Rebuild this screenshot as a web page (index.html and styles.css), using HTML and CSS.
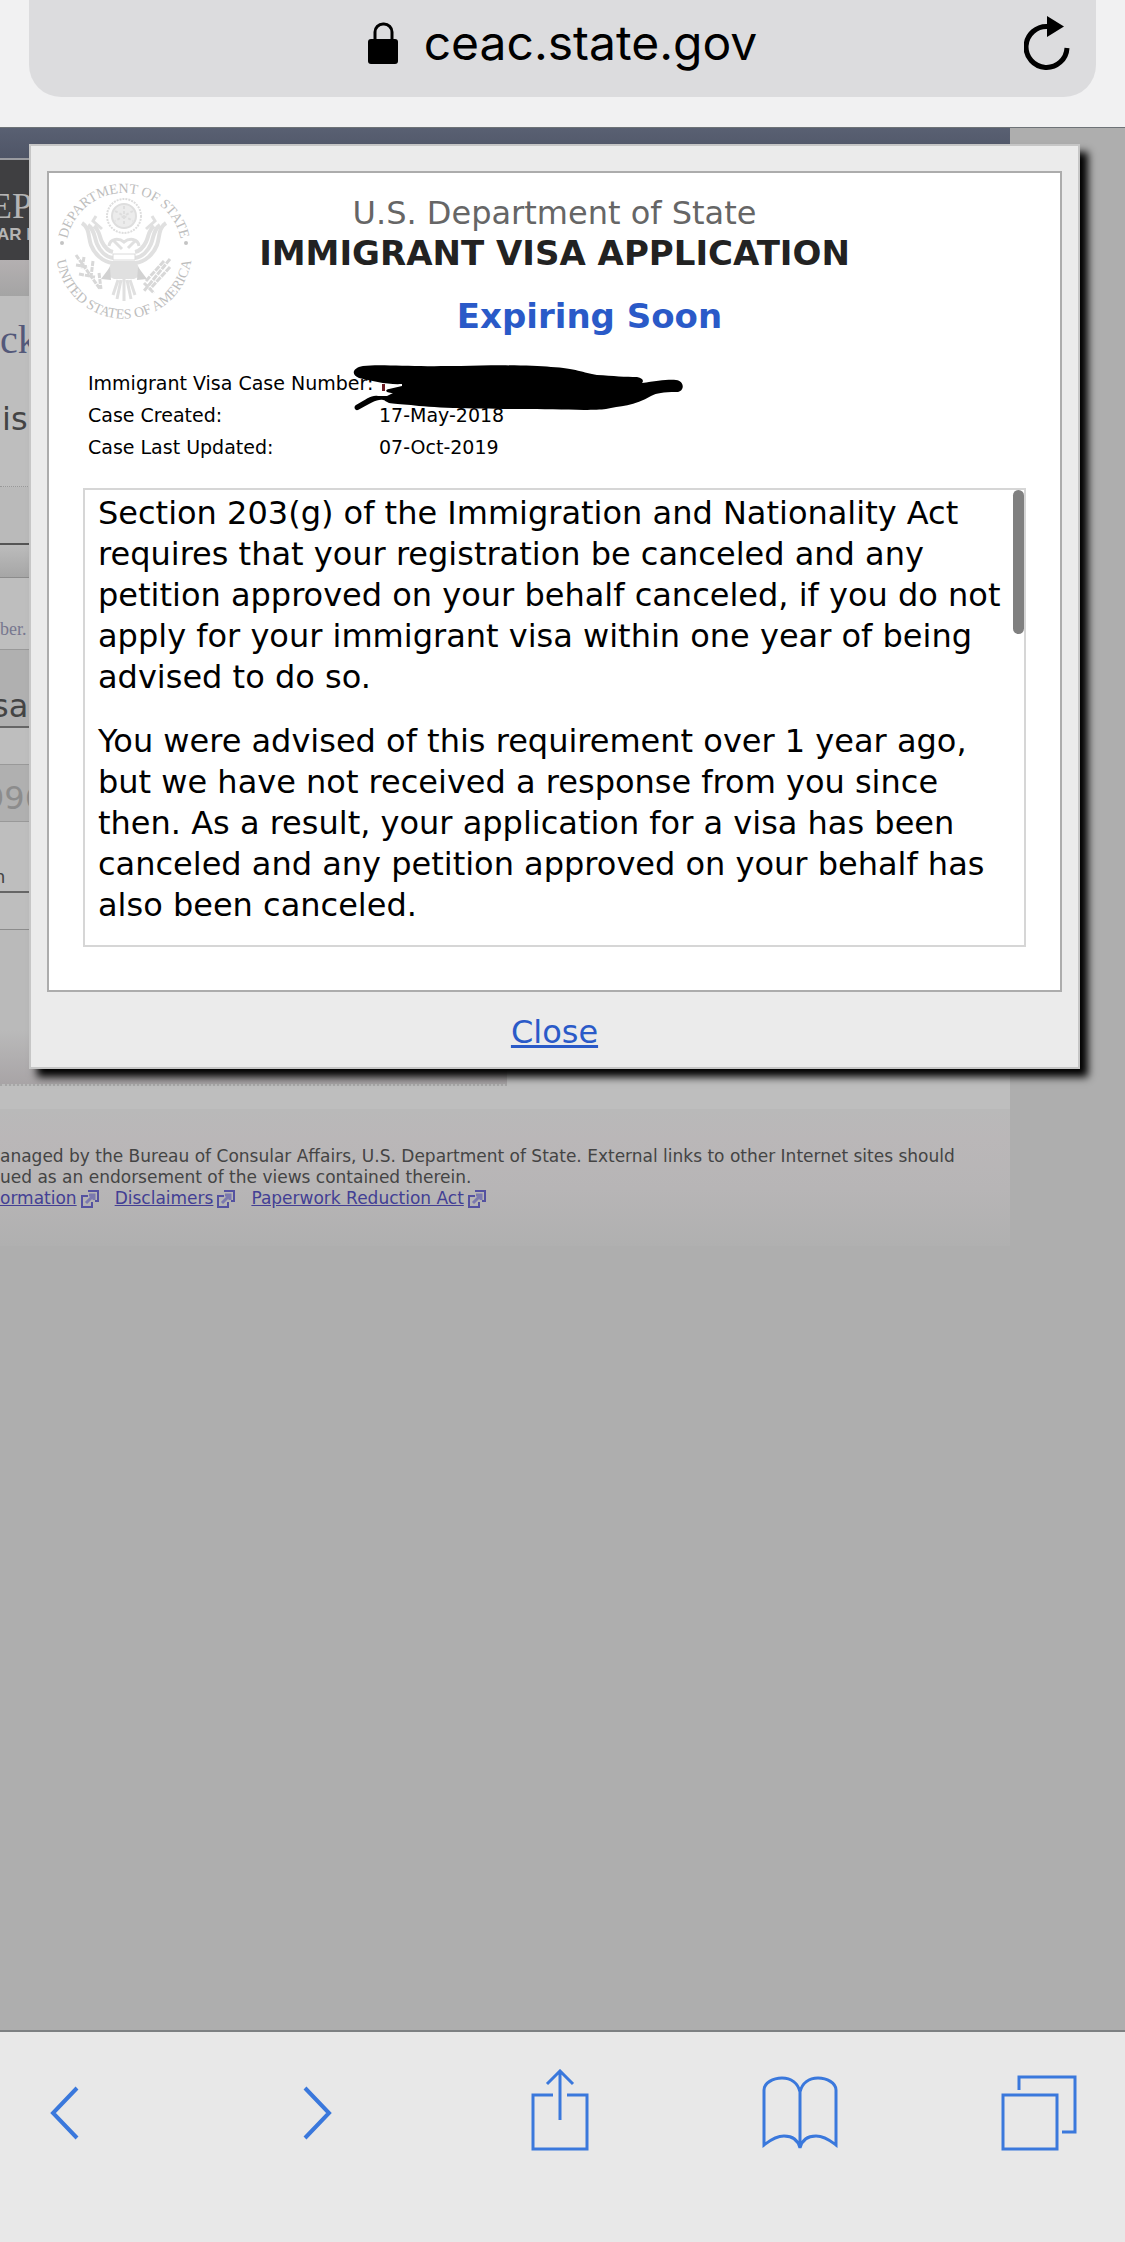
FILE: index.html
```html
<!DOCTYPE html>
<html lang="en">
<head>
    <meta charset="UTF-8">
    <meta name="viewport" content="width=device-width, initial-scale=1.0">
    <title>ceac.state.gov</title>
    <link rel="stylesheet" href="styles.css">
</head>
<body>

    <header class="address-bar">
        <div class="address-pill">
            <div class="address">
                <svg class="lock" viewBox="0 0 30 42" aria-hidden="true">
                    <path d="M7 20V10a8 8 0 0 1 8-8h1a8 8 0 0 1 8 8v10" fill="none" stroke="#000" stroke-width="3"/>
                    <rect x="0" y="17" width="30" height="25" rx="3"/>
                </svg>
                <span>ceac.state.gov</span>
            </div>
            <button class="reload" aria-label="Reload">
                <svg width="46" height="54" viewBox="0 0 46 54" aria-hidden="true">
                    <path d="M43 32A20.500 20.500 0 1 1 24 10.500" fill="none" stroke="#000" stroke-width="5"/>
                    <path d="M23 0v21l17-10.500z"/>
                </svg>
            </button>
        </div>
    </header>

    <main class="viewport">
        <!-- Page under the dialog -->
        <div class="site">
            <div class="site-top"></div>
            <div class="site-banner">
                <span class="banner-title">EP</span>
                <span class="banner-sub">AR B</span>
            </div>
            <div class="site-fade"></div>
            <div class="site-content">
                <h2 class="site-heading">ck</h2>
                <p class="site-text">is</p>
                <div class="blank"></div>
                <div class="bar"></div>
                <p class="hint">ber.</p>
                <p class="field visa">sa</p>
                <div class="gap"></div>
                <p class="field number">996</p>
                <p class="field-note">n</p>
                <div class="gap"></div>
                <div class="rest"></div>
            </div>
            <footer class="site-footer">
                <p>anaged by the Bureau of Consular Affairs, U.S. Department of State. External links to other Internet sites should</p>
                <p>ued as an endorsement of the views contained therein.</p>
                <nav class="footer-links">
                    <a href="#">ormation</a>
                    <svg class="ext" viewBox="0 0 18 18" aria-hidden="true"><path d="M7 6H1v11h10v-5M7 1h10v10h-3"/><path class="ext-arrow" d="M5 13l7-7M8 5h5v5"/></svg>
                    <a href="#">Disclaimers</a>
                    <svg class="ext" viewBox="0 0 18 18" aria-hidden="true"><path d="M7 6H1v11h10v-5M7 1h10v10h-3"/><path class="ext-arrow" d="M5 13l7-7M8 5h5v5"/></svg>
                    <a href="#">Paperwork Reduction Act</a>
                    <svg class="ext" viewBox="0 0 18 18" aria-hidden="true"><path d="M7 6H1v11h10v-5M7 1h10v10h-3"/><path class="ext-arrow" d="M5 13l7-7M8 5h5v5"/></svg>
                </nav>
            </footer>
        </div>

        <!-- Case status dialog -->
        <section class="dialog" role="dialog" aria-labelledby="dialogTitle">
            <div class="panel">
                <svg class="seal" viewBox="0 0 144 144" aria-hidden="true">
                    <defs>
                        <path id="sealTop" d="M14 72a58 58 0 0 1 116 0"/>
                        <path id="sealBottom" d="M5 60a68 68 0 1 0 134 0"/>
                    </defs>
                    <g class="seal-text">
                        <text><textPath href="#sealTop" startOffset="50%">DEPARTMENT OF STATE</textPath></text>
                        <text><textPath href="#sealBottom" startOffset="50%">UNITED STATES OF AMERICA</textPath></text>
                    </g>
                    <g fill="#c4c4c4">
                        <circle cx="10" cy="64" r="2"/>
                        <circle cx="134" cy="64" r="2"/>
                    </g>
                    <!-- glory of stars -->
                    <g fill="none" stroke="#dedede" stroke-width="2">
                        <circle cx="72" cy="37" r="17" stroke-dasharray="2 1"/>
                        <circle cx="72" cy="37" r="12" fill="#ececec"/>
                        <path d="M72 27v20M63 32l18 10M81 32l-18 10" stroke-dasharray="3 2"/>
                    </g>
                    <!-- wings -->
                    <g fill="none" stroke="#e0e0e0" stroke-width="4">
                        <path d="M30 44c8 5 6 14 9 22s11 17 22 18"/>
                        <path d="M36 46c7 5 6 12 9 19s9 13 16 14"/>
                        <path d="M42 47c6 5 5 10 8 16s6 9 11 10"/>
                        <path d="M114 44c-8 5-6 14-9 22s-11 17-22 18"/>
                        <path d="M108 46c-7 5-6 12-9 19s-9 13-16 14"/>
                        <path d="M102 47c-6 5-5 10-8 16s-6 9-11 10"/>
                        <path d="M50 50l-9-8 3-5M94 50l9-8-3-5" stroke-width="3"/>
                        <path d="M57 67c1-8 10-8 15-4 5-4 14-4 15 4M62 62l8 8M84 61l-8 8" stroke-width="3"/>
                    </g>
                    <path d="M61 75h22v6H61z" fill="#fff" stroke="#dadada"/>
                    <!-- shield, tail, olive branch and arrows -->
                    <path d="M60 82h24l6 14-8 4H62l-8-4z" fill="#e0e0e0"/>
                    <path d="M58 88l-9 12 10 1zM86 88l9 12-10 1z" fill="#d2d2d2"/>
                    <path d="M72 100v22M66 101l-5 15M78 101l5 15M69 101l-4 19M75 101l4 19" stroke="#e0e0e0" stroke-width="3"/>
                    <g stroke="#d8d8d8" stroke-width="3" fill="none">
                        <path d="M24 76l24 34M24 86l12 2M27 95l16 3M32 78l-2 12M41 82l-2 16M47 94l2 16" stroke-dasharray="5 1"/>
                        <path d="M118 80l-26 32M112 82l-18 20M118 88l-20 22M92 104l10 10" stroke-dasharray="6 1"/>
                    </g>
                </svg>

                <div class="titles">
                    <p class="dept">U.S. Department of State</p>
                    <h1 id="dialogTitle">IMMIGRANT VISA APPLICATION</h1>
                    <p class="status">Expiring Soon</p>
                </div>

                <div class="case">
                    <table class="case-table">
                        <tr><th scope="row">Immigrant Visa Case Number:</th><td></td></tr>
                        <tr><th scope="row">Case Created:</th><td>17-May-2018</td></tr>
                        <tr><th scope="row">Case Last Updated:</th><td>07-Oct-2019</td></tr>
                    </table>
                    <!-- hidden case number -->
                    <svg class="scribble" viewBox="0 0 340 50" aria-hidden="true">
                        <path d="M31 20h3v7h-3z" fill="#6b1a22"/>
                        <path d="M12 2C30 0 60 3 90 2L110 2C140 1 180 1 200 3C225 4 232 9 246 11C262 12 275 13 286 13C292 14 293 17 291 19C305 17 318 15 325 16C334 17 334 28 325 28C312 28 306 29 300 32C284 42 268 42 255 45C240 47 200 45 170 45C130 45 80 44 60 41C50 40 42 40 38 39C35 38 34 36 32 36C26 35 20 39 7 46C4 47 2 43 5 41C16 35 20 31 27 32L36 32L42 29C35 29 33 26 38 25L51 22L51 20C38 21 20 17 8 14C0 11 1 4 12 2z"/>
                    </svg>
                </div>

                <div class="notice">
                    <div class="notice-text">
                        <p>Section 203(g) of the Immigration and Nationality Act requires that your registration be canceled and any petition approved on your behalf canceled, if you do not apply for your immigrant visa within one year of being advised to do so.</p>
                        <p>You were advised of this requirement over 1 year ago, but we have not received a response from you since then. As a result, your application for a visa has been canceled and any petition approved on your behalf has also been canceled.</p>
                    </div>
                    <div class="thumb"></div>
                </div>
            </div>
            <a class="close" href="#">Close</a>
        </section>
    </main>

    <nav class="toolbar">
        <button aria-label="Back">
            <svg width="30" height="54" viewBox="0 0 30 54"><path d="M27 2L3 27l24 25" stroke-width="4"/></svg>
        </button>
        <button aria-label="Forward">
            <svg width="30" height="54" viewBox="0 0 30 54"><path d="M3 2l24 25L3 52" stroke-width="4"/></svg>
        </button>
        <button aria-label="Share">
            <svg width="58" height="88" viewBox="0 0 58 88"><path d="M22 26H2v54h54V26H36M29 51V3M16 15L29 2l13 13"/></svg>
        </button>
        <button aria-label="Bookmarks">
            <svg width="76" height="74" viewBox="0 0 76 74"><path d="M38 72V16C36 7 29 2 20 2S2 7 2 14v55c4-3 11-9 20-9 9 0 14 4 16 12 2-8 7-12 16-12 9 0 16 6 20 9V14c0-7-9-12-18-12S40 7 38 16"/></svg>
        </button>
        <button aria-label="Tabs">
            <svg width="76" height="76" viewBox="0 0 76 76"><path d="M2 20h54v54H2zM18 15V2h56v55H61"/></svg>
        </button>
    </nav>

</body>
</html>
```

FILE: styles.css
```css
* {
    box-sizing: border-box;
}

body {
    display: flex;
    flex-direction: column;
    min-height: 100vh;
    margin: 0;
    background-color: #aeaeae;
    color: #000000;
    font-family: Verdana, "DejaVu Sans", sans-serif;
}

h1, h2, p {
    margin: 0;
}

button {
    padding: 0;
    border: none;
    background: none;
    cursor: pointer;
}

svg {
    display: block;
}

/* Address Bar Styles */
.address-bar {
    padding: 0 29px 30px;
    background-color: #f1f1f2;
    border-bottom: 1px solid #6e7377;
}

.address-pill {
    display: grid;
    grid-template-columns: 1fr auto 1fr;
    align-items: center;
    height: 97px;
    padding: 0 26px 12px;
    background-color: #dcdcde;
    border-radius: 0 0 32px 32px;
}

.address {
    grid-column: 2;
    display: flex;
    align-items: center;
    gap: 26px;
    font-family: Inter, sans-serif;
    font-size: 48px;
}

.lock {
    width: 30px;
    height: 42px;
}

.reload {
    justify-self: end;
}

/* Page Styles */
.viewport {
    position: relative;
    flex: 1;
    overflow: hidden;
}

.site {
    margin-right: 115px;
    color: #444444;
}

.site-top {
    height: 30px;
    background: linear-gradient(#596072, #4f5567);
}

.site-banner {
    display: flex;
    flex-direction: column;
    height: 102px;
    padding-top: 28px;
    border-top: 2px solid #9a9ba0;
    background-color: #3f3f41;
    color: #b5b5b5;
}

.banner-title {
    font: 36px/36px "Liberation Serif", serif;
    text-indent: -10px;
}

.banner-sub {
    font: bold 17px/22px "Liberation Sans", sans-serif;
    text-indent: -3px;
}

.site-fade {
    height: 36px;
    background: linear-gradient(#b4b0b1, #a4a4a4);
}

.site-content {
    height: 813px;
    background-color: #bebebe;
}

.site-heading {
    padding-top: 20px;
    color: #54597a;
    font: 40px/48px "Liberation Serif", serif;
}

.site-text {
    height: 123px;
    padding: 35px 0 0 2px;
    border-bottom: 1px dotted #999999;
    font-size: 32px;
    line-height: 40px;
}

.blank {
    height: 56px;
    background-color: #bababa;
}

.bar {
    height: 35px;
    border-top: 2px solid #555555;
    border-bottom: 1px solid #8c8c8c;
    background: linear-gradient(#bcbcbc, #a6a6a6);
}

.hint {
    height: 71px;
    padding-top: 38px;
    color: #77778f;
    font: 18px/26px "Liberation Serif", serif;
}

.field {
    border-top: 1px solid #999999;
    background-color: #b0b0b0;
    font-size: 32px;
    line-height: 40px;
}

.visa {
    height: 79px;
    padding-top: 36px;
    text-indent: -8px;
    border-bottom: 2px solid #666666;
}

.gap {
    height: 36px;
}

.number {
    height: 58px;
    padding-top: 13px;
    text-indent: -16px;
    border-bottom: 1px solid #999999;
    color: #8c8c8c;
}

.field-note {
    height: 71px;
    padding-top: 43px;
    text-indent: -6px;
    border-bottom: 2px solid #666666;
    font-size: 18px;
    line-height: 24px;
}

.rest {
    width: 507px;
    height: 157px;
    border-top: 1px solid #8c8c8c;
    border-bottom: 2px dotted #a6a6a6;
    background: linear-gradient(#bababa 100px, #a8a4a6);
}

.site-footer {
    height: 137px;
    padding-top: 37px;
    background: linear-gradient(#b9b9b9, #bab7b8 30px, #b7b5b6 80px, #b0b0b0);
    font-size: 17px;
    line-height: 21px;
    white-space: nowrap;
}

.footer-links {
    display: flex;
    align-items: center;
}

.footer-links a {
    color: #433f94;
}

.ext {
    width: 18px;
    height: 18px;
    margin: 0 16px 0 4px;
    fill: none;
    stroke: #5451a0;
    stroke-width: 2;
}

.ext-arrow {
    stroke: #7b79ae;
    stroke-width: 3;
}

/* Dialog Styles */
.dialog {
    position: absolute;
    top: 16px;
    left: 29px;
    right: 45px;
    padding: 25px 16px 0;
    border: 2px solid #c6c6c6;
    background-color: #ebebeb;
    box-shadow: 8px 8px 8px #000000;
    text-align: center;
}

.panel {
    height: 821px;
    padding: 20px 34px 0;
    border: 2px solid #acacac;
    background-color: #ffffff;
}

.seal {
    position: absolute;
    top: 33px;
    left: 21px;
    width: 144px;
    height: 144px;
}

.seal-text {
    fill: #bdbdbd;
    font: 14px "Liberation Serif", serif;
    text-anchor: middle;
}

.titles {
    font-size: 32px;
    line-height: 40px;
}

.dept {
    color: #666666;
}

h1 {
    color: #222222;
    font-size: 34px;
}

.status {
    padding: 23px 0 0 70px;
    color: #2a5ac8;
    font-size: 34px;
    font-weight: bold;
}

.case {
    position: relative;
    padding: 31px 5px 0;
}

.case-table {
    border-spacing: 0;
    font-size: 19px;
    line-height: 32px;
    text-align: left;
}

.case-table th {
    width: 291px;
    padding: 0;
    font-weight: normal;
    white-space: nowrap;
}

.case-table td {
    padding: 0;
}

.scribble {
    position: absolute;
    top: 28px;
    left: 268px;
    width: 340px;
    height: 50px;
}

.notice {
    position: relative;
    height: 459px;
    margin-top: 25px;
    border: 2px solid #d6d6d6;
}

.notice-text {
    display: grid;
    gap: 23px;
    padding: 3px 18px 0 13px;
    font-size: 32px;
    line-height: 41px;
    text-align: left;
}

.thumb {
    position: absolute;
    top: 0;
    right: 0;
    width: 11px;
    height: 144px;
    border-radius: 6px;
    background-color: #808080;
}

.close {
    display: inline-block;
    padding: 20px 0 15px;
    color: #2a5ac8;
    font-size: 32px;
    line-height: 40px;
}

/* Toolbar Styles */
.toolbar {
    display: grid;
    grid-template-columns: 252fr 229fr 231fr 239fr auto;
    align-items: center;
    justify-items: start;
    height: 212px;
    padding: 0 48px 48px 50px;
    border-top: 2px solid #7d8082;
    background-color: #e8e8e8;
}

.toolbar svg {
    fill: none;
    stroke: #3a78dc;
    stroke-width: 3;
}
```
